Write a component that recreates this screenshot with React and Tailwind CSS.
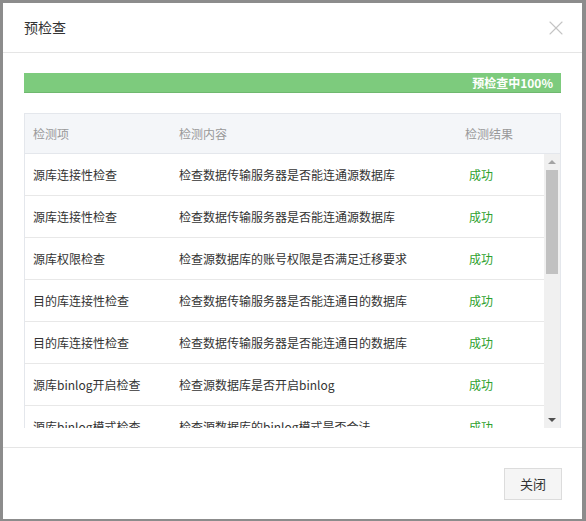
import { X } from "lucide-react";

const rows = [
  { item: "源库连接性检查", desc: "检查数据传输服务器是否能连通源数据库" },
  { item: "源库连接性检查", desc: "检查数据传输服务器是否能连通源数据库" },
  { item: "源库权限检查", desc: "检查源数据库的账号权限是否满足迁移要求" },
  { item: "目的库连接性检查", desc: "检查数据传输服务器是否能连通目的数据库" },
  { item: "目的库连接性检查", desc: "检查数据传输服务器是否能连通目的数据库" },
  { item: "源库binlog开启检查", desc: "检查源数据库是否开启binlog" },
  { item: "源库binlog模式检查", desc: "检查源数据库的binlog模式是否合法" },
];

const App = () => {
  return (
    <div
      className="w-[586px] h-[521px] bg-[#8c8c8c] pt-[3px] pl-[3px] overflow-hidden"
      style={{ fontFamily: '"Noto Sans CJK SC", "Noto Sans", sans-serif' }}
    >
      <div className="w-[579px] h-[516px] bg-white flex flex-col">
        {/* Header */}
        <div className="h-[50px] shrink-0 flex items-center justify-between pl-[21px] pr-[14px] border-b border-[#e5e5e5]">
          <span className="text-[14px] text-[#333]">预检查</span>
          <X size={24} strokeWidth={1.1} className="text-[#c4c4c4]" />
        </div>

        {/* Body */}
        <div className="flex-1 px-[21px] pt-[20px]">
          <div className="h-[20px] bg-[#7dcb7d] flex items-center justify-end pr-[8px] border-b border-[#6fb86f]">
            <span className="text-[12px] font-bold text-white leading-none">预检查中100%</span>
          </div>

          <div className="mt-[20px] border border-[#e4e7ec] border-b-0">
            <div className="h-[40px] bg-[#f4f6f9] flex items-center text-[12px] text-[#999] border-b border-[#e4e7ec]">
              <div className="w-[146px] pl-[8px]">检测项</div>
              <div className="w-[286px] pl-[8px]">检测内容</div>
              <div className="pl-[8px]">检测结果</div>
            </div>
            <div className="h-[274px] flex overflow-hidden">
              <div className="flex-1 overflow-hidden">
                {rows.map((row, i) => (
                  <div
                    key={i}
                    className="h-[42px] shrink-0 flex items-center text-[12px] text-[#333] border-b border-[#e8e8e8]"
                  >
                    <div className="w-[146px] pl-[8px] whitespace-nowrap">{row.item}</div>
                    <div className="w-[290px] pl-[8px] whitespace-nowrap">{row.desc}</div>
                    <div className="pl-[8px] text-[#2ea12e]">成功</div>
                  </div>
                ))}
              </div>
              {/* Scrollbar */}
              <div className="w-[16px] bg-[#f0f0f0] flex flex-col items-center">
                <div className="h-[16px] w-full flex items-center justify-center">
                  <div className="w-0 h-0 border-l-[4px] border-r-[4px] border-b-[4px] border-l-transparent border-r-transparent border-b-[#a3a3a3]" />
                </div>
                <div className="w-[12px] h-[104px] bg-[#c1c1c1]" />
                <div className="flex-1" />
                <div className="h-[16px] w-full flex items-center justify-center">
                  <div className="w-0 h-0 border-l-[4px] border-r-[4px] border-t-[4px] border-l-transparent border-r-transparent border-t-[#505050]" />
                </div>
              </div>
            </div>
          </div>
        </div>

        {/* Footer */}
        <div className="h-[72px] shrink-0 border-t border-[#e5e5e5] flex items-center justify-end pr-[20px]">
          <button className="w-[58px] h-[32px] bg-[#f5f5f5] border border-[#dcdcdc] text-[13px] text-[#333]">
            关闭
          </button>
        </div>
      </div>
    </div>
  );
};

export default App;
